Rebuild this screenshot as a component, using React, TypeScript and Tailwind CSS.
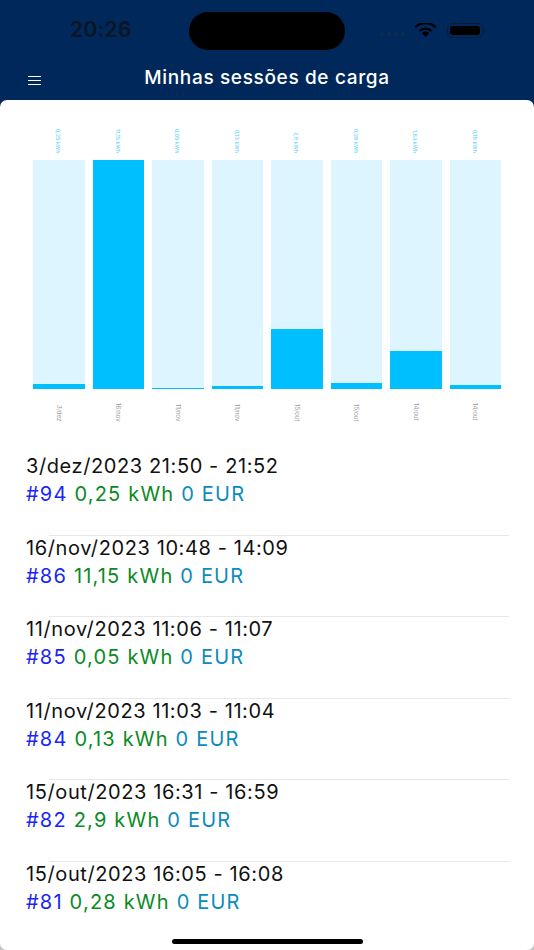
import React from 'react';

const bars = [
  { value: '0,25 kWh', day: '3/dez', height: 'h-[5px]' },
  { value: '11,15 kWh', day: '16/nov', height: 'h-[229px]' },
  { value: '0,05 kWh', day: '11/nov', height: 'h-[1px]' },
  { value: '0,13 kWh', day: '11/nov', height: 'h-[3px]' },
  { value: '2,9 kWh', day: '15/out', height: 'h-[60px]' },
  { value: '0,28 kWh', day: '15/out', height: 'h-[6px]' },
  { value: '1,83 kWh', day: '14/out', height: 'h-[38px]' },
  { value: '0,18 kWh', day: '14/out', height: 'h-[4px]' },
];

const sessions = [
  { date: '3/dez/2023 21:50 - 21:52', id: '#94', kwh: '0,25 kWh' },
  { date: '16/nov/2023 10:48 - 14:09', id: '#86', kwh: '11,15 kWh' },
  { date: '11/nov/2023 11:06 - 11:07', id: '#85', kwh: '0,05 kWh' },
  { date: '11/nov/2023 11:03 - 11:04', id: '#84', kwh: '0,13 kWh' },
  { date: '15/out/2023 16:31 - 16:59', id: '#82', kwh: '2,9 kWh' },
  { date: '15/out/2023 16:05 - 16:08', id: '#81', kwh: '0,28 kWh' },
];

const StatusBar = () => (
  <div className="flex h-[60px] items-start">
    <span className="ml-[70px] mt-[17px] w-[119px] text-[21px] leading-[26px] font-semibold tracking-[0.3px] text-[#0b1524]">20:26</span>
    <div className="mt-[12px] h-[38px] w-[156px] rounded-full bg-black" />
    <div className="ml-[35px] mt-[32px] flex gap-[3px]">
      <span className="h-[4px] w-[4px] rounded-full bg-[#0f2c52]" />
      <span className="h-[4px] w-[4px] rounded-full bg-[#0f2c52]" />
      <span className="h-[4px] w-[4px] rounded-full bg-[#0f2c52]" />
      <span className="h-[4px] w-[4px] rounded-full bg-[#0f2c52]" />
    </div>
    <svg className="ml-[9px] mt-[23px]" width="23" height="14" viewBox="0 0 23 14">
      <path d="M11.5 14 L7.8 10 A5.5 5.5 0 0 1 15.2 10 Z" fill="#000" />
      <path d="M5.6 8 A8.6 8.6 0 0 1 17.4 8" fill="none" stroke="#000" strokeWidth="2.4" />
      <path d="M1.2 4.4 A14.6 14.6 0 0 1 21.8 4.4" fill="none" stroke="#000" strokeWidth="2.4" />
    </svg>
    <div className="ml-[10px] mt-[23px] flex items-center">
      <div className="h-[15px] w-[36px] rounded-[5px] border border-[#0b1c38] p-[2px]">
        <div className="h-full w-full rounded-[3px] bg-black" />
      </div>
      <div className="ml-[1px] h-[5px] w-[1px] bg-[#0b1c38]" />
    </div>
  </div>
);

const Header = () => (
  <div className="relative flex h-[40px] items-start justify-center">
    <div className="absolute left-[28px] top-[16px] flex w-[13px] flex-col gap-[3px]">
      <span className="h-px bg-white" />
      <span className="h-px bg-white" />
      <span className="h-px bg-white" />
    </div>
    <span className="mt-[5px] text-[19px] leading-[26px] font-medium tracking-[0.65px] text-white">Minhas sessões de carga</span>
  </div>
);

const Chart = () => (
  <div className="ml-[33px] mt-[29px] flex w-[468px] justify-between">
    {bars.map((bar, i) => (
      <div key={i} className="flex w-[51.5px] flex-col items-center">
        <div className="flex h-[31px] items-end justify-center pb-[7px] pr-[2px]">
          <span className="whitespace-nowrap text-[5.4px] leading-[7px] text-[#4fcdfb] [writing-mode:vertical-rl]">{bar.value}</span>
        </div>
        <div className="flex h-[229px] w-full flex-col justify-end bg-[#dcf5fe]">
          <div className={`${bar.height} bg-[#00bfff]`} />
        </div>
        <div className="h-[64px] pt-[14px]">
          <span className="whitespace-nowrap text-[6px] leading-[8px] text-[#999999] [writing-mode:vertical-rl]">{bar.day}</span>
        </div>
      </div>
    ))}
  </div>
);

const SessionRow = ({ date, id, kwh, last }: { date: string; id: string; kwh: string; last: boolean }) => (
  <div className="relative h-[81.5px] pl-[26px]">
    <p className="text-[20px] leading-[26px] tracking-[0.6px] text-[#111111]">{date}</p>
    <p className="mt-[2px] text-[20px] leading-[26px] tracking-[1.2px]">
      <span className="text-[#1a25f5]">{id}</span>{' '}
      <span className="text-[#0a8a1f]">{kwh}</span>{' '}
      <span className="text-[#0c8bbd]">0 EUR</span>
    </p>
    {!last && <div className="absolute bottom-[-1px] left-[49px] right-[25px] h-px bg-[#e8e8e8]" />}
  </div>
);

export default function App() {
  return (
    <div className="flex h-[950px] w-[534px] flex-col overflow-hidden bg-linear-to-b from-[#00285a] from-50% to-[#c4c4c4] to-50% font-['Inter',sans-serif]">
      <StatusBar />
      <Header />
      <div className="relative flex-1 rounded-[7px] bg-white">
        <Chart />
        <div>
          {sessions.map((s, i) => (
            <SessionRow key={s.id} date={s.date} id={s.id} kwh={s.kwh} last={i === sessions.length - 1} />
          ))}
        </div>
        <div className="absolute bottom-[6px] left-[172px] h-[5px] w-[191px] rounded-full bg-black" />
      </div>
    </div>
  );
}
